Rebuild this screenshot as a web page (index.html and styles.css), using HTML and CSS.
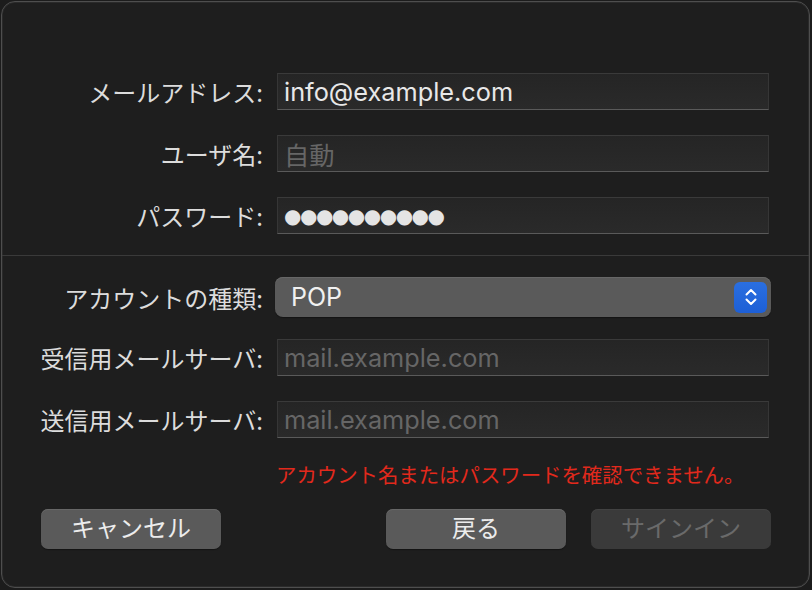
FILE: index.html
```html
<!DOCTYPE html>
<html lang="ja">
<head>
<meta charset="utf-8">
<title>アカウントを追加</title>
<link rel="stylesheet" href="styles.css">
</head>
<body>
<div class="window">
  <div class="section top">
    <div class="row">
      <label class="label">メールアドレス:</label>
      <div class="field"><span class="value">info@example.com</span></div>
    </div>
    <div class="row">
      <label class="label">ユーザ名:</label>
      <div class="field"><span class="placeholder">自動</span></div>
    </div>
    <div class="row">
      <label class="label">パスワード:</label>
      <div class="field"><span class="dots">●●●●●●●●●●</span></div>
    </div>
  </div>
  <div class="divider"></div>
  <div class="section bottom">
    <div class="row popup-row">
      <label class="label">アカウントの種類:</label>
      <div class="popup">
        <span class="popup-value">POP</span>
        <span class="stepper">
          <svg width="16" height="22" viewBox="0 0 16 22" fill="none" stroke="#ffffff" stroke-width="2" stroke-linecap="round" stroke-linejoin="round"><path d="M3.5 8.5 L8 4 L12.5 8.5"/><path d="M3.5 13.5 L8 18 L12.5 13.5"/></svg>
        </span>
      </div>
    </div>
    <div class="row gap22">
      <label class="label">受信用メールサーバ:</label>
      <div class="field"><span class="placeholder">mail.example.com</span></div>
    </div>
    <div class="row">
      <label class="label">送信用メールサーバ:</label>
      <div class="field"><span class="placeholder">mail.example.com</span></div>
    </div>
    <div class="row error-row">
      <span></span>
      <p class="error">アカウント名またはパスワードを確認できません。</p>
    </div>
  </div>
  <div class="buttons">
    <button class="btn">キャンセル</button>
    <div class="spacer"></div>
    <button class="btn">戻る</button>
    <button class="btn disabled">サインイン</button>
  </div>
</div>
</body>
</html>
```
FILE: styles.css
```css
* { box-sizing: border-box; }
html, body { margin: 0; padding: 0; background: #1c1c1c; }
body { padding: 1px 2px 2px 1px; }

.window {
  width: 809px;
  height: 587px;
  background: #1e1e1e;
  border: 1px solid #4e4e4e;
  border-radius: 14px;
  box-shadow: inset 0 0 0 1px #2a2a2a;
  font-family: "Inter", "Noto Sans CJK JP", sans-serif;
  color: #dedede;
  overflow: hidden;
}

.section.top { padding-top: 71px; }

.row {
  display: grid;
  grid-template-columns: 261px 492px;
  column-gap: 14px;
  align-items: center;
  height: 37px;
  margin-top: 25px;
}
.section.top .row:first-child { margin-top: 0; }

.label {
  text-align: right;
  font-size: 24px;
  font-family: "Noto Sans CJK JP", "Inter", sans-serif;
  color: #dcdcdc;
  white-space: nowrap;
  line-height: 37px;
}

.field {
  height: 37px;
  background: linear-gradient(#252525, #2a2a2a);
  border: 1px solid #363636;
  border-top-color: #3a3a3a;
  border-bottom-color: #5a5a5a;
  padding: 0 6px;
  display: flex;
  align-items: center;
  overflow: hidden;
}
.value { font-size: 25.3px; color: #e8e8e8; white-space: nowrap; }
.placeholder {
  font-size: 25.3px;
  color: #666666;
  white-space: nowrap;
  font-family: "Inter", "Noto Sans CJK JP", sans-serif;
}
.dots {
  font-family: "DejaVu Sans", sans-serif;
  font-size: 20px;
  letter-spacing: -1.5px;
  color: #e4e4e4;
}

.divider {
  height: 1px;
  background: #3a3a3a;
  margin-top: 21px;
}

.section.bottom .popup-row { margin-top: 21px; height: 40px; }
.popup {
  margin: 0 -2px;
  height: 40px;
  background: #5a5a5a;
  border-radius: 8px;
  box-shadow: inset 0 1px 0 #676767, 0 1px 1px rgba(0,0,0,0.35);
  display: flex;
  align-items: center;
  justify-content: space-between;
  padding: 0 4px 0 16px;
}
.popup-value { font-size: 25px; color: #f0f0f0; }
.stepper {
  width: 33px;
  height: 31px;
  border-radius: 6px;
  background: linear-gradient(#2a6fe0, #1d5fd6);
  display: flex;
  align-items: center;
  justify-content: center;
}
.stepper svg { display: block; }

.row.gap22 { margin-top: 22px; }

.row.error-row { height: 24px; margin-top: 24px; }
.error {
  margin: 0 0 0 -1px;
  font-size: 20.4px;
  line-height: 24px;
  color: #e2291c;
  font-family: "Noto Sans CJK JP", sans-serif;
  white-space: nowrap;
}

.buttons {
  display: flex;
  margin-top: 23px;
  padding: 0 38px 0 39px;
  gap: 25px;
}
.spacer { flex: 1; }
.btn {
  width: 180px;
  height: 40px;
  border: none;
  border-radius: 7px;
  background: #5a5a5a;
  box-shadow: inset 0 1px 0 #676767, 0 1px 1px rgba(0,0,0,0.35);
  color: #ececec;
  font-family: "Noto Sans CJK JP", sans-serif;
  font-size: 24px;
  line-height: 36px;
  padding: 0 0 4px;
}
.btn.disabled {
  background: #3a3a3a;
  box-shadow: inset 0 1px 0 #424242;
  color: #6a6a6a;
}
```
